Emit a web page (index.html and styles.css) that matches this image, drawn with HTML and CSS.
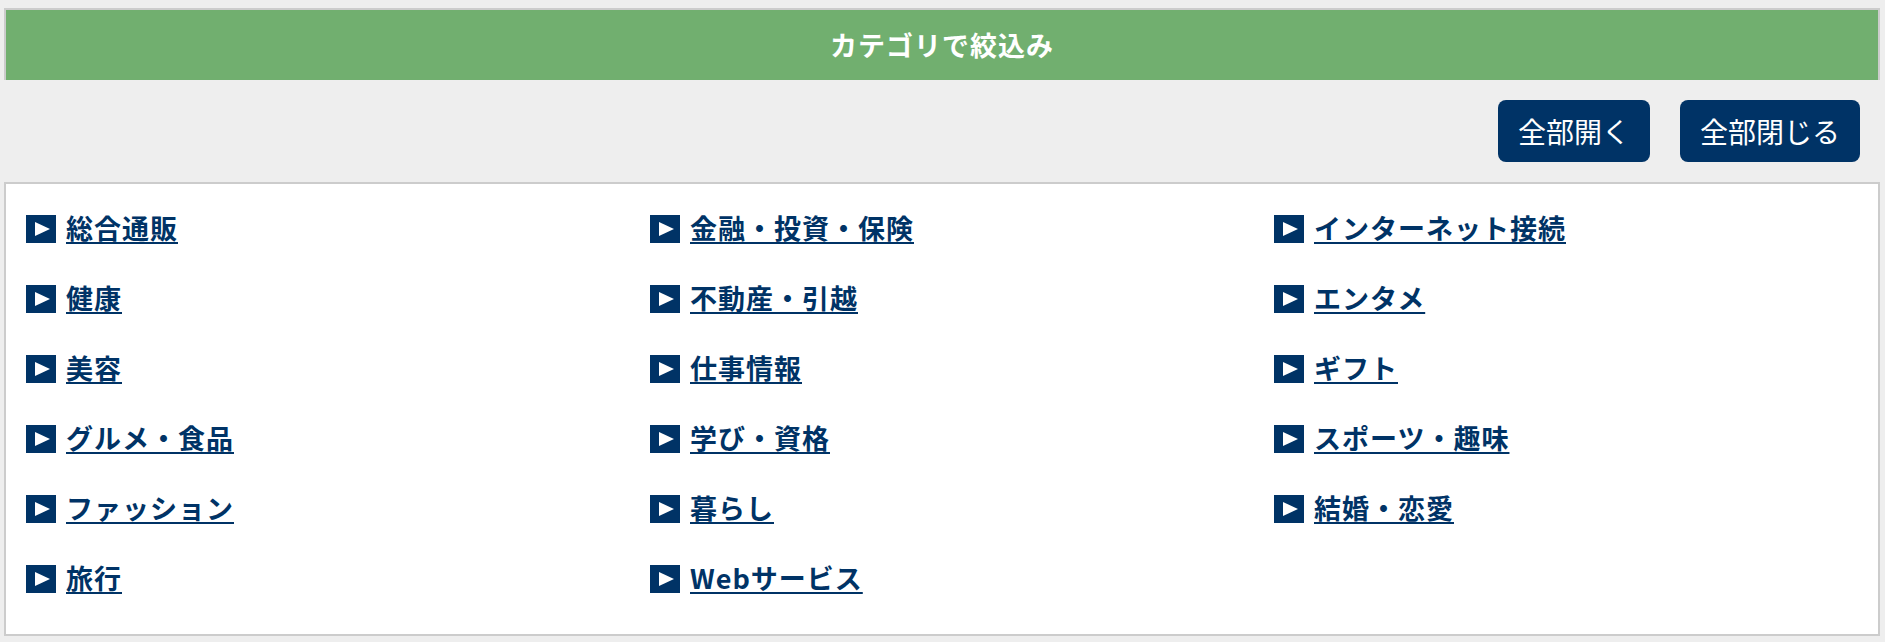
FILE: index.html
```html
<!DOCTYPE html>
<html lang="ja">
<head>
  <meta charset="UTF-8">
  <title>カテゴリで絞込み</title>
  <link rel="stylesheet" href="styles.css">
</head>
<body>
  <div class="wrap">
    <h2 class="cat-title">カテゴリで絞込み</h2>
    <div class="cat-tools">
      <button class="btn">全部開く</button>
      <button class="btn">全部閉じる</button>
    </div>
    <div class="cat-box">
      <ul class="cat-col">
        <li><span class="arrow"></span><a href="#">総合通販</a></li>
        <li><span class="arrow"></span><a href="#">健康</a></li>
        <li><span class="arrow"></span><a href="#">美容</a></li>
        <li><span class="arrow"></span><a href="#">グルメ・食品</a></li>
        <li><span class="arrow"></span><a href="#">ファッション</a></li>
        <li><span class="arrow"></span><a href="#">旅行</a></li>
      </ul>
      <ul class="cat-col">
        <li><span class="arrow"></span><a href="#">金融・投資・保険</a></li>
        <li><span class="arrow"></span><a href="#">不動産・引越</a></li>
        <li><span class="arrow"></span><a href="#">仕事情報</a></li>
        <li><span class="arrow"></span><a href="#">学び・資格</a></li>
        <li><span class="arrow"></span><a href="#">暮らし</a></li>
        <li><span class="arrow"></span><a href="#">Webサービス</a></li>
      </ul>
      <ul class="cat-col">
        <li><span class="arrow"></span><a href="#">インターネット接続</a></li>
        <li><span class="arrow"></span><a href="#">エンタメ</a></li>
        <li><span class="arrow"></span><a href="#">ギフト</a></li>
        <li><span class="arrow"></span><a href="#">スポーツ・趣味</a></li>
        <li><span class="arrow"></span><a href="#">結婚・恋愛</a></li>
      </ul>
    </div>
  </div>
</body>
</html>
```
FILE: styles.css
```css
body {
  margin: 0;
  background: #eeeeee;
  font-family: "Noto Sans CJK JP", "Noto Sans", sans-serif;
}
.wrap {
  padding: 8px 5px 0 4px;
}
.cat-title {
  margin: 0;
  height: 70px;
  line-height: 70px;
  background: #71af6f;
  border: 2px solid #cccccc;
  border-bottom: none;
  color: white;
  font-size: 27px;
  font-weight: bold;
  letter-spacing: 1px;
  text-align: center;
}
.cat-tools {
  display: flex;
  justify-content: flex-end;
  gap: 30px;
  padding: 20px 20px 20px 0;
}
.btn {
  height: 62px;
  padding: 0 20px;
  border: none;
  border-radius: 8px;
  background: #003366;
  color: white;
  font-family: "Noto Sans CJK JP", sans-serif;
  font-size: 28px;
}
.cat-box {
  display: flex;
  background: white;
  border: 2px solid #cccccc;
  padding: 10px 0 20px;
}
.cat-col {
  flex: 1;
  margin: 0;
  padding: 0;
  list-style: none;
}
.cat-col li {
  display: flex;
  align-items: center;
  height: 70px;
  padding-left: 20px;
}
.arrow {
  width: 30px;
  height: 28px;
  margin-right: 10px;
  background: #003366;
  position: relative;
}
.arrow::after {
  content: "";
  position: absolute;
  left: 9px;
  top: 7px;
  border-left: 15px solid white;
  border-top: 7px solid transparent;
  border-bottom: 7px solid transparent;
}
.cat-col a {
  margin-top: -4px;
  color: #003366;
  font-size: 27px;
  font-weight: bold;
  letter-spacing: 1px;
  text-decoration: underline;
  text-decoration-thickness: 2px;
  text-underline-offset: 3px;
}
```
